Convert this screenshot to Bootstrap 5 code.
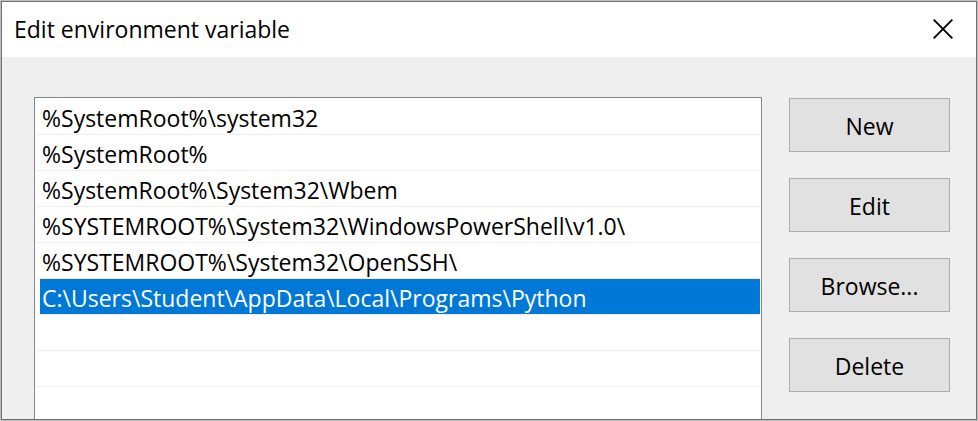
<!DOCTYPE html>
<html lang="en">
<head>
<meta charset="utf-8">
<meta name="viewport" content="width=device-width, initial-scale=1">
<title>Edit environment variable</title>
<link href="https://cdn.jsdelivr.net/npm/bootstrap@5.3.0/dist/css/bootstrap.min.css" rel="stylesheet">
<style>
  body { background: #bdbdbd; padding: 1px; font-family: "Segoe UI", "Open Sans", "Noto Sans", sans-serif; font-size: 23px; line-height: 32px; color: #000; }
  .dialog-window { border: 1px solid #707070; background: #efefef; }
  .title-bar { background: #fff; padding: 0 19px 2px 12px; height: 55px; }
  .title-text { font-size: 23px; line-height: 32px; font-weight: 400; }
  .close-btn { width: 28px; height: 28px; border-radius: 0; color: #000; }
  .dialog-body { padding: 40px 26px 0 32px; gap: 27px; }
  .path-list { background: #fff; border: 1px solid #828790; border-bottom: 0; padding: 1px 1px 0; }
  .path-list .path-row { height: 36px; flex: none; border: 0; border-bottom: 1px solid #efefef; border-radius: 0; padding: 0 0 0 4px; background: #fff; color: #000; }
  .path-row span { display: block; height: 35px; line-height: 38px; padding-left: 2px; white-space: nowrap; overflow: hidden; }
  .path-list .path-row.active { margin: 0; }
  .path-row.active span { background: #0078d7; color: #fff; }
  .actions { width: 161px; gap: 26px; padding-top: 1px; }
  .action-btn { height: 54px; padding: 2px 0 0; border: 1px solid #adadad; border-radius: 0; background: #e1e1e1; color: #000; font-size: 23px; line-height: 32px; }
</style>
</head>
<body class="vh-100 overflow-hidden">
<main class="dialog-window h-100 d-flex flex-column overflow-hidden" role="dialog" aria-labelledby="dialogTitle">
  <header class="title-bar d-flex align-items-center justify-content-between flex-shrink-0">
    <h1 class="title-text m-0" id="dialogTitle">Edit environment variable</h1>
    <button type="button" class="btn close-btn p-0 border-0 d-flex align-items-center justify-content-center" aria-label="Close">
      <svg width="20" height="20" viewBox="0 0 20 20" fill="none" stroke="currentColor" stroke-width="1.9" aria-hidden="true"><path d="M.7.7l18.6 18.6M19.3.7L.7 19.3"/></svg>
    </button>
  </header>
  <div class="dialog-body d-flex flex-grow-1 overflow-hidden">
    <div class="path-list list-group rounded-0 flex-grow-1 overflow-hidden">
      <button type="button" class="path-row list-group-item list-group-item-action"><span>%SystemRoot%\system32</span></button>
      <button type="button" class="path-row list-group-item list-group-item-action"><span>%SystemRoot%</span></button>
      <button type="button" class="path-row list-group-item list-group-item-action"><span>%SystemRoot%\System32\Wbem</span></button>
      <button type="button" class="path-row list-group-item list-group-item-action"><span>%SYSTEMROOT%\System32\WindowsPowerShell\v1.0\</span></button>
      <button type="button" class="path-row list-group-item list-group-item-action"><span>%SYSTEMROOT%\System32\OpenSSH\</span></button>
      <button type="button" class="path-row list-group-item list-group-item-action active" aria-current="true"><span>C:\Users\Student\AppData\Local\Programs\Python</span></button>
      <div class="path-row list-group-item"></div>
      <div class="path-row list-group-item"></div>
    </div>
    <div class="actions d-flex flex-column flex-shrink-0">
      <button type="button" class="btn action-btn">New</button>
      <button type="button" class="btn action-btn">Edit</button>
      <button type="button" class="btn action-btn">Browse...</button>
      <button type="button" class="btn action-btn">Delete</button>
    </div>
  </div>
</main>
<script src="https://cdn.jsdelivr.net/npm/bootstrap@5.3.0/dist/js/bootstrap.bundle.min.js"></script>
</body>
</html>
